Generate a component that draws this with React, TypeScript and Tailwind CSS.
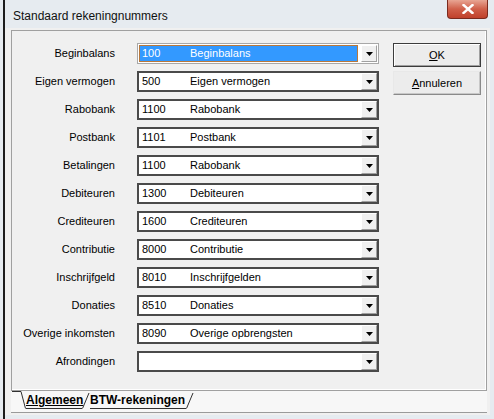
import React from "react";

const rows: [string, string, string][] = [
  ["Beginbalans", "100", "Beginbalans"],
  ["Eigen vermogen", "500", "Eigen vermogen"],
  ["Rabobank", "1100", "Rabobank"],
  ["Postbank", "1101", "Postbank"],
  ["Betalingen", "1100", "Rabobank"],
  ["Debiteuren", "1300", "Debiteuren"],
  ["Crediteuren", "1600", "Crediteuren"],
  ["Contributie", "8000", "Contributie"],
  ["Inschrijfgeld", "8010", "Inschrijfgelden"],
  ["Donaties", "8510", "Donaties"],
  ["Overige inkomsten", "8090", "Overige opbrengsten"],
  ["Afrondingen", "", ""],
];

const Arrow = () => (
  <div className="w-[16px] h-full bg-[#f0f0f0] border border-t-white border-l-white border-b-[#a0a0a0] border-r-[#a0a0a0] flex items-center justify-center">
    <svg width="7" height="4" viewBox="0 0 7 4">
      <path d="M0 0H7L3.5 4Z" fill="#000" />
    </svg>
  </div>
);

const Combo = ({ code, name, focused }: { code: string; name: string; focused?: boolean }) => {
  if (focused) {
    return (
      <div className="w-[242px] h-[21px] flex border border-[#a8a8a8] bg-white p-[1px]">
        <div className="flex-1 flex items-center pl-[2px] bg-[#3399ff] border border-[#b8783c] text-white">
          <span className="w-[48px]">{code}</span>
          <span>{name}</span>
        </div>
        <div className="w-[3px]" />
        <Arrow />
      </div>
    );
  }
  return (
    <div className="w-[242px] h-[21px] flex border-2 border-[#4a4a4a] bg-white">
      <div className="flex-1 flex items-center pl-[3px]">
        <span className="w-[48px]">{code}</span>
        <span>{name}</span>
      </div>
      <Arrow />
    </div>
  );
};

const Slash = () => (
  <svg width="8" height="18" viewBox="0 0 8 18" className="shrink-0">
    <path d="M0.5 17.5L7 2" stroke="#303030" strokeWidth="1" fill="none" />
  </svg>
);

export default function App() {
  return (
    <div
      className="w-[494px] h-[419px] bg-[#e6ebf0] pl-[3px] flex"
      style={{ fontFamily: '"Liberation Sans", Arial, sans-serif' }}
    >
      <div className="flex-1 flex flex-col border-l-2 border-[#1c1c1c] pr-[4px] pb-[4px]">
        {/* title bar */}
        <div className="h-[28px] flex items-start justify-between">
          <div className="pl-[8px] pt-[7px] text-[12px] text-[#111]">Standaard rekeningnummers</div>
          <div className="w-[41px] h-[19px] mr-[2px] rounded-b-[4px] border border-t-0 border-[#7a2a1e] bg-[linear-gradient(#e8a593,#d0604a_50%,#c0412c)] flex items-center justify-center">
            <svg width="12" height="10" viewBox="0 0 12 10">
              <path d="M1.5 1L10.5 9M10.5 1L1.5 9" stroke="#fff" strokeWidth="2.4" strokeLinecap="square" />
            </svg>
          </div>
        </div>

        {/* client */}
        <div className="flex-1 flex flex-col bg-[#f0f0f0] pl-[6px] pr-[3px] pt-[2px] text-[11px] text-black">
          <div className="h-[361px] flex border border-[#a0a0a0] shadow-[inset_-1px_-1px_0_#fff] pt-[12px]">
            <div className="flex flex-col gap-[7px]">
              {rows.map(([label, code, name], i) => (
                <div key={label} className="flex items-center h-[21px]">
                  <div className="w-[103px] text-right">{label}</div>
                  <div className="ml-[22px]">
                    <Combo code={code} name={name} focused={i === 0} />
                  </div>
                </div>
              ))}
            </div>
            <div className="ml-[14px] flex flex-col gap-[4px]">
              <button className="w-[88px] h-[24px] bg-[#ececec] border border-[#3c3c3c] shadow-[inset_1px_1px_0_#fff,inset_-1px_-1px_0_#a0a0a0] text-[11px]">
                <span className="underline">O</span>K
              </button>
              <button className="w-[88px] h-[24px] bg-[#ececec] border border-t-[#e8e8e8] border-l-[#e8e8e8] border-b-[#8a8a8a] border-r-[#8a8a8a] shadow-[inset_-1px_-1px_0_#c8c8c8] text-[11px]">
                <span className="underline">A</span>nnuleren
              </button>
            </div>
          </div>

          {/* tab strip */}
          <div className="h-[22px] flex items-start pl-[1px] bg-[#f7f7f7] border-b border-[#9a9a9a] text-[12px] font-bold">
            <svg width="14" height="18" viewBox="0 0 14 18" className="shrink-0">
              <path d="M0 0.5H9L13.5 17.5" stroke="#303030" strokeWidth="1" fill="none" />
            </svg>
            <div className="w-[56px] h-[18px] border-b border-[#303030] flex items-center leading-none pt-[1px]">
              <span className="underline">Algemeen</span>
            </div>
            <Slash />
            <div className="w-[96px] h-[18px] border-b border-[#303030] flex items-center leading-none pt-[1px]">
              BTW-rekeningen
            </div>
            <Slash />
          </div>
        </div>
      </div>
    </div>
  );
}
